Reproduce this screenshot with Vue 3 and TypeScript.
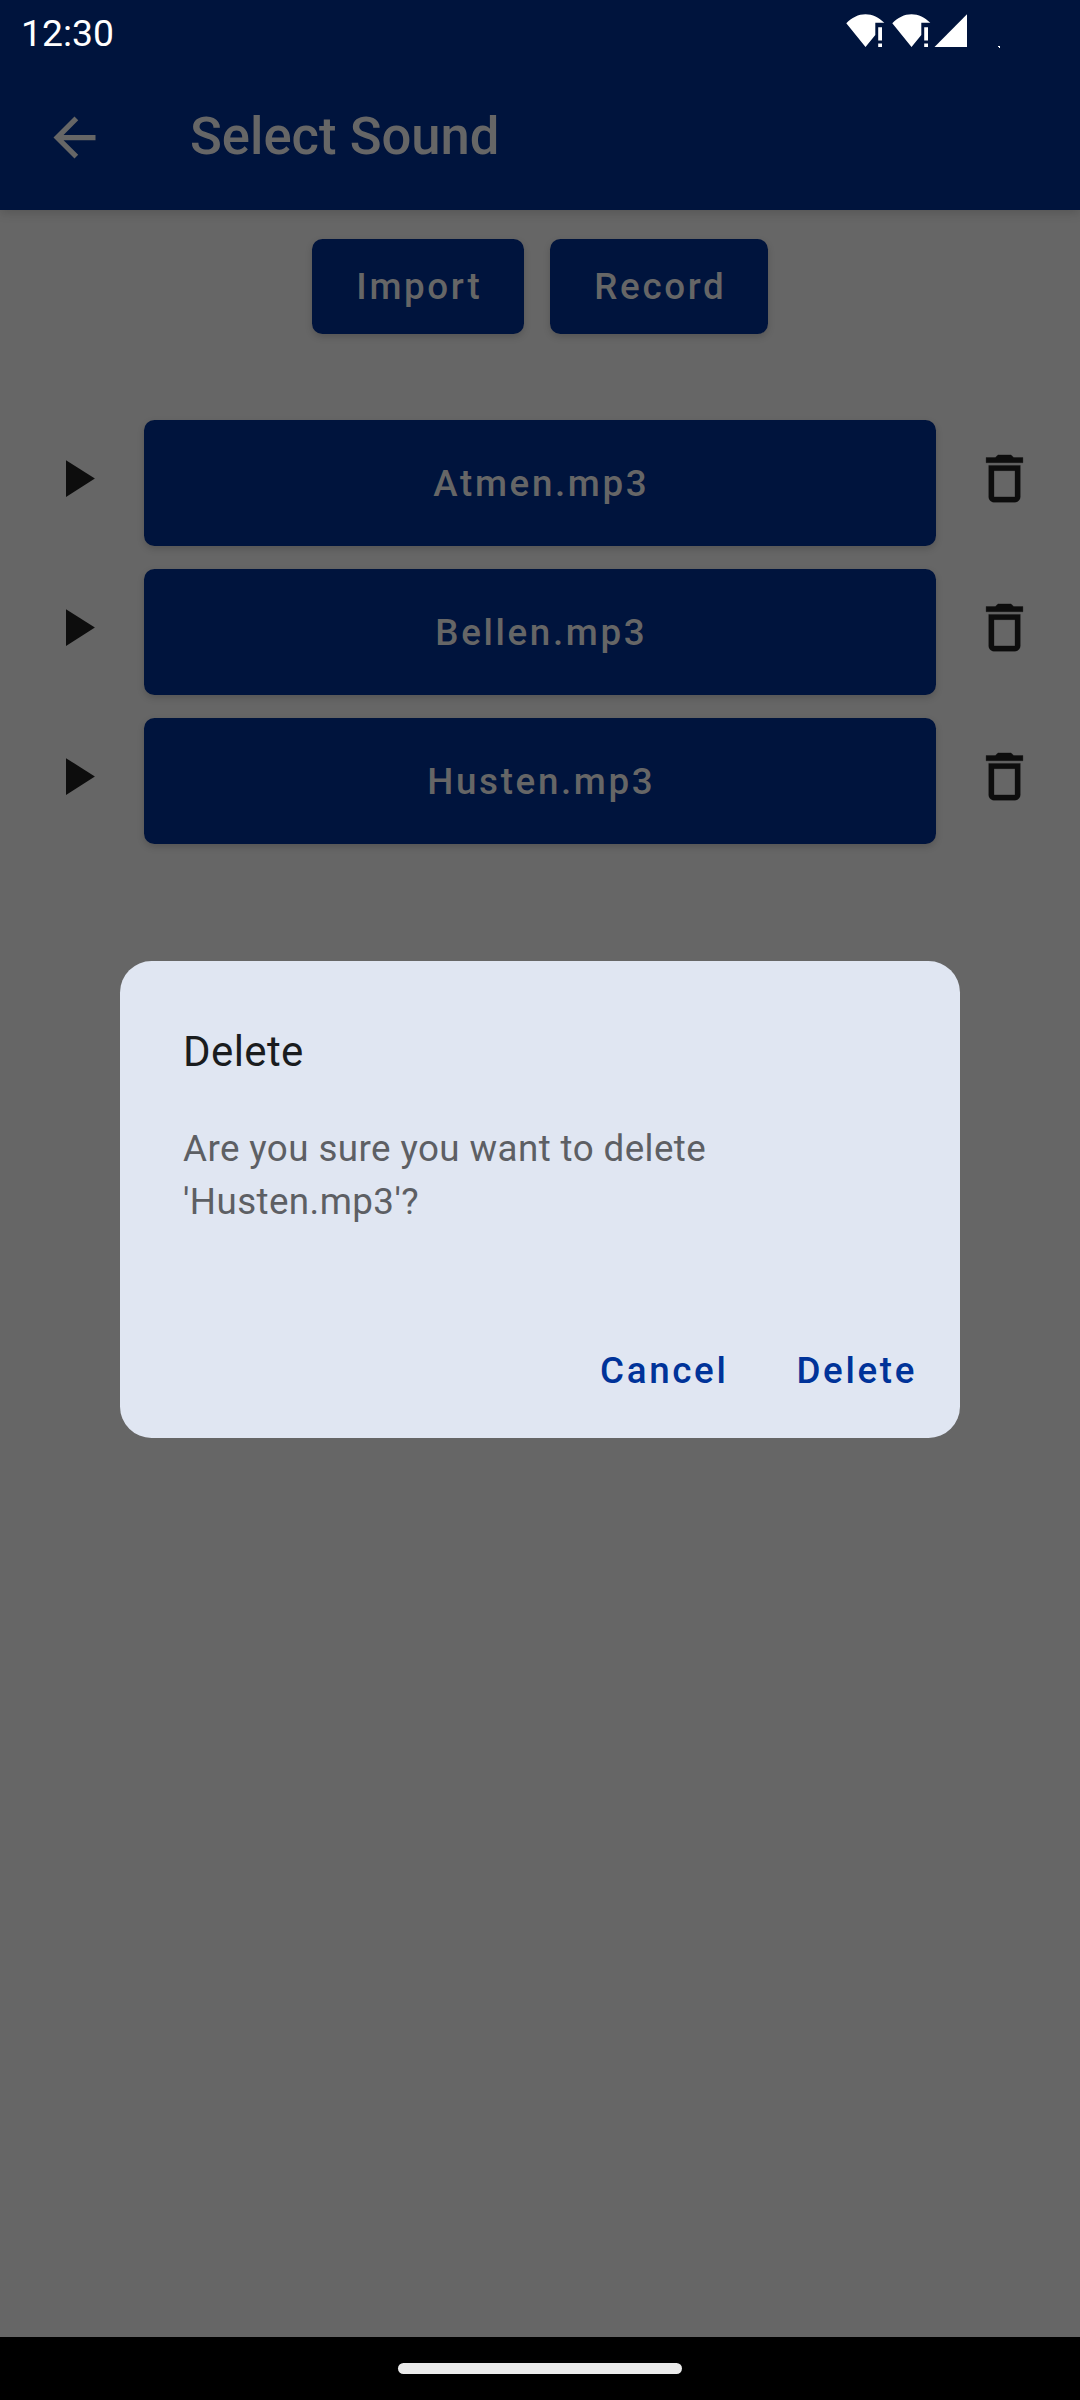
<script setup lang="ts">
import { ref } from 'vue'

const sounds = ref<string[]>(['Atmen.mp3', 'Bellen.mp3', 'Husten.mp3'])
const pending = ref<string>('Husten.mp3')
</script>

<template>
  <div class="screen">
    <header class="top">
      <div class="status">
        <span class="clock">12:30</span>
        <svg class="signals" width="156" height="34" viewBox="0 0 156 34" fill="#fff">
          <g v-for="x in [0, 46]" :key="x" :transform="`translate(${x} 0)`">
            <path d="M0.3 9.3C5.5 3.5 12.5 0.2 19.500 0.2S33 3.500 38.300 8.700H29.300V21L19.500 33Z" />
            <path d="M32.200 13.200h3.800V26.500h-3.800zM32.200 29.500h3.800V33h-3.800z" />
          </g>
          <path d="M88.500 33L121 0.200V33Z" />
          <path d="M152 32h2v2h-1v-1h-1z" />
        </svg>
      </div>
      <div class="appbar">
        <svg class="back" width="63" height="63" viewBox="0 0 24 24" fill="#666">
          <path d="M20 11H7.830l5.590-5.590L12 4l-8 8 8 8 1.410-1.410L7.830 13H20v-2z" />
        </svg>
        <h1>Select Sound</h1>
      </div>
    </header>

    <main>
      <div class="actions">
        <button class="btn import">Import</button>
        <button class="btn record">Record</button>
      </div>
      <ul class="list">
        <li v-for="name in sounds" :key="name">
          <svg class="play" width="63" height="63" viewBox="0 0 24 24" fill="#0d0d0d">
            <path d="M8 5v14l11-7z" />
          </svg>
          <button class="btn sound">{{ name }}</button>
          <svg class="trash" width="63" height="63" viewBox="0 0 24 24" fill="#0d0d0d" stroke="#0d0d0d" stroke-width="0.12">
            <path d="M6 19c0 1.100.9 2 2 2h8c1.100 0 2-.9 2-2V7H6v12zM8 9h8v10H8V9zM15.500 4l-1-1h-5l-1 1H5v2h14V4h-3.500z" />
          </svg>
        </li>
      </ul>
    </main>

    <footer><div class="handle"></div></footer>

    <section class="dialog" role="dialog">
      <h2>Delete</h2>
      <p>Are you sure you want to delete '{{ pending }}'?</p>
      <div class="choices">
        <button>Cancel</button>
        <button>Delete</button>
      </div>
    </section>
  </div>
</template>

<style>
body {
  margin: 0;
  background: #666;
}
</style>

<style scoped>
.screen {
  position: relative;
  display: flex;
  flex-direction: column;
  width: 1080px;
  height: 2400px;
  overflow: hidden;
  background: #666;
  font-family: Roboto, "Liberation Sans", sans-serif;
}
button {
  border: 0;
  margin: 0;
  font-family: inherit;
}
.top {
  height: 210px;
  background: #00143d;
  box-shadow: 0 3px 10px rgba(0, 0, 0, 0.16);
}
.status {
  display: flex;
  justify-content: space-between;
  align-items: flex-start;
  height: 63px;
  padding: 0 78px 0 21px;
}
.clock {
  margin-top: 12px;
  font-size: 37.300px;
  line-height: 43px;
  color: #fff;
}
.signals {
  margin-top: 14px;
}
.appbar {
  display: flex;
  align-items: center;
  height: 147px;
}
.back {
  margin: 2px 0 0 43px;
}
h1 {
  margin: 0 0 2px 84px;
  font-size: 52.600px;
  font-weight: 500;
  line-height: 62px;
  color: #666;
}
main {
  flex: 1;
}
.actions {
  display: flex;
  justify-content: center;
  gap: 26px;
  padding-top: 29px;
}
.btn {
  height: 95px;
  padding: 0;
  border-radius: 10.500px;
  background: #00143d;
  box-shadow: 0 3px 7px rgba(0, 0, 0, 0.17);
  color: #666;
  font-size: 36.750px;
  font-weight: 500;
  letter-spacing: 2.650px;
  text-indent: 2.650px;
}
.import {
  width: 212px;
}
.record {
  width: 218px;
}
.list {
  display: flex;
  flex-direction: column;
  gap: 23px;
  margin: 86px 0 0;
  padding: 0;
  list-style: none;
}
li {
  display: flex;
  align-items: flex-start;
  padding: 0 44px 0 45px;
}
li svg {
  flex: none;
  margin-top: 27px;
}
.sound {
  flex: 1;
  height: 126px;
  margin: 0 37px 0 36px;
}
footer {
  display: flex;
  justify-content: center;
  height: 63px;
  background: #000;
}
.handle {
  width: 284px;
  height: 11px;
  margin-top: 26px;
  border-radius: 6px;
  background: #ebebeb;
}
.dialog {
  position: absolute;
  left: 120px;
  top: 961px;
  box-sizing: border-box;
  display: flex;
  flex-direction: column;
  width: 840px;
  height: 477px;
  padding: 66px 43px 19px 63px;
  border-radius: 31.500px;
  background: #e0e6f2;
}
h2 {
  margin: 0;
  font-size: 42px;
  font-weight: 400;
  line-height: 50px;
  letter-spacing: 0.4px;
  color: #1a1c1e;
}
p {
  width: 620px;
  margin: 45px 0 0;
  font-size: 36.750px;
  line-height: 53px;
  letter-spacing: 0.410px;
  color: #5d5f64;
}
.choices {
  display: flex;
  justify-content: flex-end;
  gap: 68px;
  margin-top: 95px;
}
.choices button {
  padding: 0;
  background: none;
  color: #003399;
  font-size: 36.750px;
  font-weight: 500;
  line-height: 96px;
  letter-spacing: 2.650px;
}
</style>
